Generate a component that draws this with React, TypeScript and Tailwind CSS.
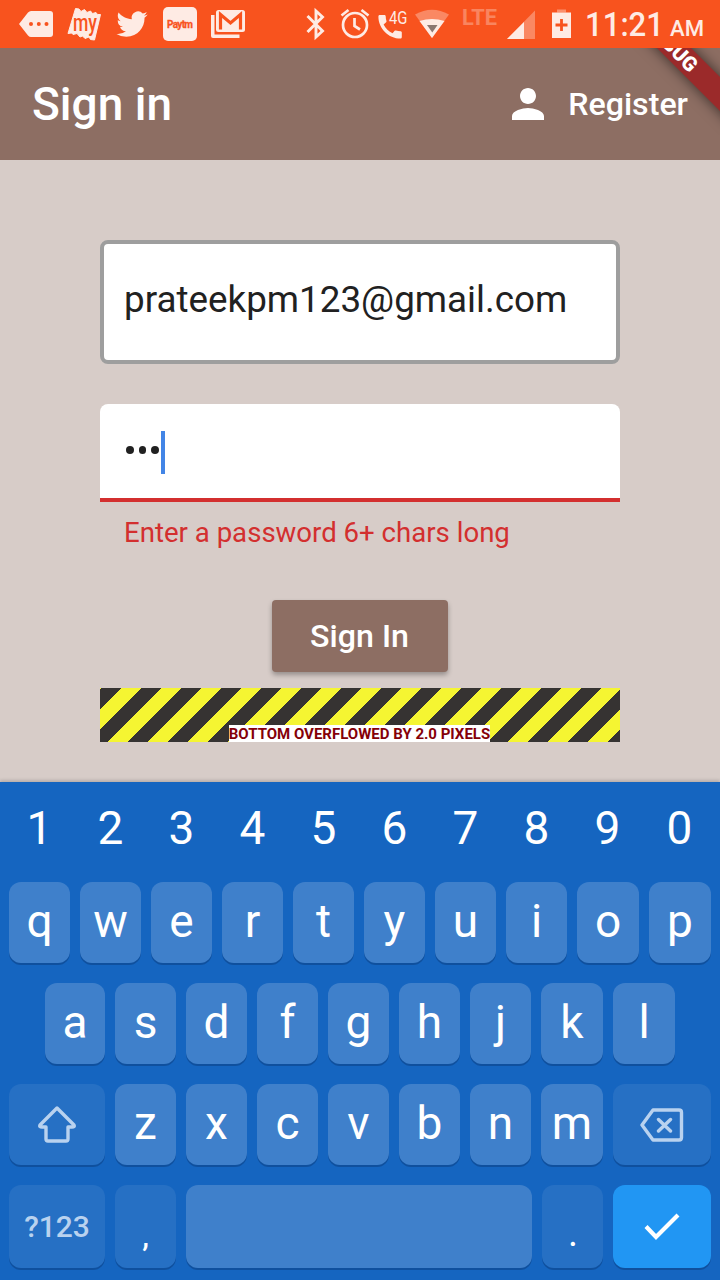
import React from "react";

type KeyProps = { label?: string; className?: string; children?: React.ReactNode };

function Key({ label, className = "", children }: KeyProps) {
  return (
    <div className={`flex shrink-0 items-center justify-center rounded-[12px] shadow-[0_2px_0_#0f509e] ${className}`}>
      {children ?? <span className="pb-1 text-[46px] leading-none">{label}</span>}
    </div>
  );
}

const digits = "1234567890".split("");
const topRow = "qwertyuiop".split("");
const homeRow = "asdfghjkl".split("");
const lowerRow = "zxcvbnm".split("");

function StatusBar() {
  return (
    <header className="flex h-12 bg-[#f8531e] text-[#feebe4]">
      <svg width="720" height="48" viewBox="0 0 720 48" fill="currentColor">
        <path d="M19 24 L28 12.5 Q29.500 11 31 11 H50 Q53 11 53 14 V34 Q53 37 50 37 H31 Q29.500 37 28 35.500Z" />
        <g fill="#f8531e">
          <circle cx="31" cy="24" r="2" /><circle cx="38.800" cy="24" r="2" /><circle cx="46.500" cy="24" r="2" />
        </g>
        <path d="M75.500 8.500 L79 9 81 11.500 84.500 9.500 87 12.500 90.500 11 92.500 13.500 96 12.500 97.500 14.500 100.500 14.500 94.500 40 90.500 39.500 89 37 85 38.500 82.500 36 80 37 77 33.500 73 34.500 71.500 33 68 33.500Z" strokeLinejoin="round" stroke="currentColor" />
        <text x="73" y="30.500" fontSize="23" fill="#f8531e" textLength="24" lengthAdjust="spacingAndGlyphs" fontWeight="500">my</text>
        <path transform="translate(116.500 8.500) scale(1.3)" d="M23.953 4.570a10 10 0 01-2.825.775 4.958 4.958 0 002.163-2.723c-.951.555-2.005.959-3.127 1.184a4.920 4.920 0 00-8.384 4.482C7.690 8.095 4.067 6.130 1.640 3.162a4.822 4.822 0 00-.666 2.475c0 1.710.870 3.213 2.188 4.096a4.904 4.904 0 01-2.228-.616v.060a4.923 4.923 0 003.946 4.827 4.996 4.996 0 01-2.212.085 4.936 4.936 0 004.604 3.417 9.867 9.867 0 01-6.102 2.105c-.390 0-.779-.023-1.170-.067a13.995 13.995 0 007.557 2.209c9.053 0 13.998-7.496 13.998-13.985 0-.210 0-.420-.015-.630A9.935 9.935 0 0024 4.590z" />
        <rect x="163" y="7" width="34" height="34" rx="5" />
        <text x="167" y="27.500" fontSize="10" fill="#f8531e" stroke="#f8531e" strokeWidth=".3" fontWeight="700" textLength="26">Paytm</text>
        <path d="M211 15 h3.500 v19.500 h25 v3.500 H213 q-2 0-2-2Z" />
        <rect x="216" y="10" width="29" height="22" rx="2.500" />
        <path d="M220.500 29.500 V14.500 L230.500 23 L240.500 14.500 V29.500" fill="none" stroke="#f8531e" strokeWidth="3.200" />
        <path d="M307.500 16 L322.500 31 L316 37 V11 L322.500 17 L307.500 32" fill="none" stroke="currentColor" strokeWidth="2.900" />
        <g fill="none" stroke="currentColor" strokeWidth="2.700">
          <circle cx="355" cy="25" r="12" />
          <path d="M354.500 18 V26 L360 29.500 M341.500 15.500 L348.500 10 M361.500 10 L368.500 15.500" />
        </g>
        <path transform="translate(374.500 11.200) scale(1.3)" d="M20.010 15.380c-1.230 0-2.420-.2-3.530-.560-.350-.120-.740-.030-1.010.240l-1.570 1.970c-2.830-1.350-5.480-3.900-6.890-6.830l1.950-1.660c.27-.28.350-.67.240-1.020-.37-1.110-.56-2.300-.56-3.530 0-.54-.45-.99-.99-.99H4.190C3.650 3 3 3.240 3 3.990 3 13.280 10.730 21 20.010 21c.71 0 .99-.63.99-1.180v-3.450c0-.54-.45-.99-.99-.99z" />
        <text x="389" y="24" fontSize="17.500" textLength="18.500" lengthAdjust="spacingAndGlyphs">4G</text>
        <path d="M415 14.500 Q432 5 449 14.500 L432 38Z" opacity=".35" />
        <path d="M419.500 21 Q432 17 444.500 21 L432 38Z" />
        <path d="M427 25 h10.500 l-5.200 7.500Z" fill="#8b7770" />
        <text x="462" y="25" fontSize="21.500" fontWeight="700" opacity=".33" textLength="35" lengthAdjust="spacingAndGlyphs">LTE</text>
        <path d="M507 39 L535 10.500 V39Z" opacity=".35" />
        <path d="M507 39 L524 22 V39Z" />
        <path d="M557 9.500 h9 v3 h-9Z" opacity=".4" />
        <path d="M552 12.500 h19 v25.500 h-19Z" />
        <path d="M561.500 19 v12 M555.500 25 h12" stroke="#f8531e" strokeWidth="2.800" />
        <text x="585" y="36" fontSize="32.500" fontWeight="500" textLength="79" lengthAdjust="spacingAndGlyphs">11:21</text>
        <text x="670" y="36" fontSize="22" fontWeight="500" textLength="34" lengthAdjust="spacingAndGlyphs">AM</text>
      </svg>
    </header>
  );
}

export default function App() {
  return (
    <div className="flex h-[1280px] w-[720px] flex-col overflow-hidden bg-[#d7ccc8] font-[Roboto,sans-serif]">
      <StatusBar />
      <div className="relative flex h-28 items-center justify-between overflow-hidden bg-[#8d6e63] px-8 font-medium text-white">
        <h1 className="text-[46px] leading-none">Sign in</h1>
        <div className="flex items-center gap-6">
          <svg width="32" height="32" viewBox="4 4 16 16" fill="currentColor">
            <path d="M12 12c2.210 0 4-1.790 4-4s-1.790-4-4-4-4 1.790-4 4 1.790 4 4 4zm0 2c-2.670 0-8 1.340-8 4v2h16v-2c0-2.660-5.330-4-8-4z" />
          </svg>
          <span className="text-[32.2px] leading-none">Register</span>
        </div>
        <div className="absolute top-[-13px] left-[573px] flex h-6 w-[200px] rotate-45 items-center justify-center bg-[#9b2a2a] pr-[5px] text-[20.4px] font-black shadow-[0_0_14px_rgba(0,0,0,0.6)]">
          DEBUG
        </div>
      </div>
      <main className="flex h-[622px] flex-col items-center px-[100px] pt-20">
        <div className="flex h-[124px] w-full items-center rounded-[8px] border-4 border-[#9e9e9e] bg-white px-5 pb-1 text-[36.8px] text-[#212121]">
          prateekpm123@gmail.com
        </div>
        <div className="mt-10 flex h-[98px] w-full items-center rounded-t-[8px] border-b-4 border-[#d32f2f] bg-white px-[26px]">
          <span className="flex gap-[5px] pr-[2px] pb-[2px]">
            <i className="size-[7.6px] rounded-full bg-[#212121]" />
            <i className="size-[7.6px] rounded-full bg-[#212121]" />
            <i className="size-[7.6px] rounded-full bg-[#212121]" />
          </span>
          <span className="mt-[2px] h-[43px] w-1 bg-[#4285e6]" />
        </div>
        <p className="mt-[15px] h-8 w-full px-6 text-[27.6px] leading-8 text-[#d32f2f]">Enter a password 6+ chars long</p>
        <button className="mt-[51px] h-[72px] w-44 rounded-[4px] bg-[#8d6e63] pr-[1px] text-[32.2px] font-medium text-white shadow-[0_3px_5px_rgba(0,0,0,0.3)]">
          Sign In
        </button>
        <div className="mt-4 flex h-[54px] w-full items-end justify-center bg-[repeating-linear-gradient(135deg,#363332_0.8px,#363332_14.942px,#f5f532_14.942px,#f5f532_29.084px)]">
          <span className="-ml-[1px] h-[17px] bg-white text-[15px] leading-[18px] font-bold whitespace-nowrap text-[#850008]">BOTTOM OVERFLOWED BY 2.0 PIXELS</span>
        </div>
      </main>
      <section className="flex h-[498px] flex-col bg-[#1565c0] px-[9px] text-white shadow-[0_-2px_3px_rgba(0,0,0,0.15)]">
        <div className="flex h-[100px] items-center gap-[10px] text-[46px] leading-none">
          {digits.map((d) => <span key={d} className="w-[61px] pb-2 text-center last:w-[63px]">{d}</span>)}
        </div>
        <div className="flex h-[101px] gap-[10px]">
          {topRow.map((k) => <Key key={k} label={k} className={`h-[81px] bg-[#3f80cb] ${"op".includes(k) ? "w-[62px]" : "w-[61px]"}`} />)}
        </div>
        <div className="flex h-[101px] gap-[10px] px-9">
          {homeRow.map((k) => <Key key={k} label={k} className={`h-[81px] bg-[#3f80cb] ${k === "a" ? "w-[60px]" : "kl".includes(k) ? "w-[62px]" : "w-[61px]"}`} />)}
        </div>
        <div className="flex h-[101px] gap-[10px]">
          <Key className="h-[81px] w-24 bg-[#2670c4]">
            <svg width="40" height="38" viewBox="0 0 40 38" fill="none" stroke="#b9d2ef" strokeWidth="3.400" strokeLinejoin="round">
              <path d="M20 2 L37 19 Q38 21 35 21 H31 V33 Q31 35 29 35 H11 Q9 35 9 33 V21 H5 Q2 21 3 19Z" />
            </svg>
          </Key>
          {lowerRow.map((k) => <Key key={k} label={k} className={`h-[81px] bg-[#3f80cb] ${k === "m" ? "w-[62px]" : "w-[61px]"}`} />)}
          <Key className="h-[81px] w-[98px] bg-[#2670c4]">
            <svg width="44" height="34" viewBox="0 0 44 34" fill="none" stroke="#b9d2ef" strokeWidth="3.400" strokeLinejoin="round" strokeLinecap="round">
              <path d="M13 2 H39 Q41.500 2 41.500 4.500 V29.500 Q41.500 32 39 32 H13 L2 17Z M18.500 11.500 L30.500 23 M30.500 11.500 L18.500 23" />
            </svg>
          </Key>
        </div>
        <div className="flex gap-[10px]">
          <Key className="h-[83px] w-24 bg-[#2670c4]">
            <span className="text-[30px] font-medium text-[#b9d2ef]">?123</span>
          </Key>
          <Key className="h-[83px] w-[61px] bg-[#2670c4]"><span className="pt-[18px] text-[30px] leading-none font-medium">,</span></Key>
          <Key className="h-[83px] w-[346px] bg-[#3f80cb]"><span /></Key>
          <Key className="h-[83px] w-[61px] bg-[#2670c4]"><span className="pt-3 pl-[1px] text-[38px] leading-none">.</span></Key>
          <Key className="h-[83px] w-[98px] bg-[#2196f3]">
            <svg width="36" height="28" viewBox="0 0 36 28" fill="none" stroke="white" strokeWidth="4.200">
              <path d="M2 13.500 L12 24 L34 2" />
            </svg>
          </Key>
        </div>
      </section>
    </div>
  );
}
